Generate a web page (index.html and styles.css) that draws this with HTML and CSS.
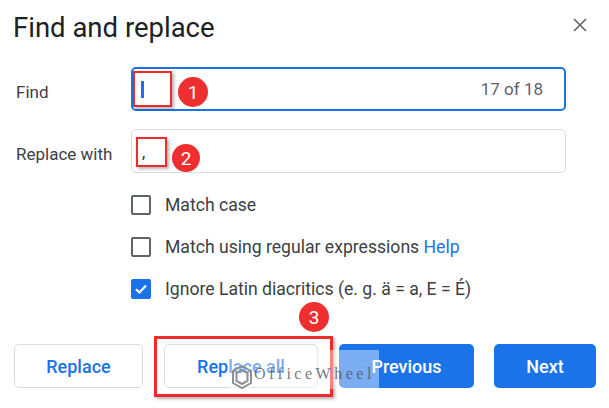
FILE: index.html
```html
<!DOCTYPE html>
<html lang="en">
<head>
<meta charset="utf-8">
<title>Find and replace</title>
<link rel="stylesheet" href="styles.css">
</head>
<body>
<div class="dialog">
  <header class="head">
    <h1 class="title">Find and replace</h1>
    <button class="close" aria-label="Close">
      <svg width="14" height="14" viewBox="0 0 14 14"><path d="M1 1L13 13M13 1L1 13" stroke="#5f6368" stroke-width="1.6" fill="none"/></svg>
    </button>
  </header>

  <div class="fields">
    <label class="label">Find</label>
    <div class="input input-focus">
      <span class="caret"></span>
      <span class="count">17 of 18</span>
    </div>
    <label class="label">Replace with</label>
    <div class="input">
      <span class="comma">,</span>
    </div>
  </div>

  <div class="options">
    <div class="option"><span class="box"></span><span class="opt-text">Match case</span></div>
    <div class="option"><span class="box"></span><span class="opt-text">Match using regular expressions <a class="help">Help</a></span></div>
    <div class="option"><span class="box box-checked"><svg width="14" height="14" viewBox="0 0 14 14"><path d="M2 7.2L5.4 10.4L12 3.6" stroke="#fff" stroke-width="2.2" fill="none"/></svg></span><span class="opt-text">Ignore Latin diacritics (e. g. ä = a, E = É)</span></div>
  </div>

  <div class="actions">
    <button class="btn btn-outline w-replace">Replace</button>
    <button class="btn btn-outline w-all">Replace all</button>
    <button class="btn btn-primary w-prev">Previous</button>
    <button class="btn btn-primary w-next">Next</button>
  </div>

  <div class="mark mark-1"></div>
  <div class="badge badge-1">1</div>
  <div class="mark mark-2"></div>
  <div class="badge badge-2">2</div>
  <div class="mark mark-3"></div>
  <div class="badge badge-3">3</div>

  <div class="watermark">
    <svg class="wm-logo" width="20" height="24" viewBox="0 0 20 24"><path d="M10 1L19 6V18L10 23L1 18V6Z M10 5L15.5 8V16L10 19L4.5 16V8Z" fill="none" stroke="#8a8f96" stroke-width="2"/></svg>
    <span class="wm-text">OfficeWheel</span>
  </div>
</div>
</body>
</html>
```

FILE: styles.css
```css
* { box-sizing: border-box; }
html, body { margin: 0; padding: 0; background: #fff; }
body { font-family: Roboto, "Noto Sans", Arial, sans-serif; color: #3c4043; }

.dialog { position: relative; width: 609px; height: 408px; overflow: hidden; }

.head {
  height: 54px;
  display: flex;
  align-items: center;
  justify-content: space-between;
  padding: 0 22px 0 13px;
}
.title { margin: 0; font-size: 27.5px; font-weight: 400; color: #202124; letter-spacing: 0; }
.close { border: 0; background: none; padding: 0; width: 14px; height: 14px; display: flex; margin-top: -4px; }

.fields {
  margin-top: 13px;
  display: grid;
  grid-template-columns: 131px 435px;
  row-gap: 18px;
  align-items: center;
}
.label { padding: 5px 0 0 16px; font-size: 17px; color: #3c4043; }
.input {
  position: relative;
  height: 44px;
  border: 1px solid #dadce0;
  border-radius: 5px;
  display: flex;
  align-items: center;
  padding: 0 21px 0 10px;
}
.input-focus { border: 2px solid #1a73e8; padding-left: 8px; }
.caret { width: 3px; height: 17px; background: #1a73e8; }
.count { margin-left: auto; font-size: 17px; color: #5f6368; }
.comma { font-size: 16px; color: #202124; margin-top: 2px; }

.options { margin: 11px 0 0 131px; }
.option { height: 42px; display: flex; align-items: center; }
.box {
  width: 20px; height: 20px;
  border: 2px solid #5f6368;
  border-radius: 2px;
  margin-right: 14px;
  display: flex; align-items: center; justify-content: center;
}
.box-checked { background: #1a73e8; border-color: #1a73e8; }
.opt-text { font-size: 17.6px; color: #3c4043; }
.help { color: #1a73e8; text-decoration: none; }

.actions {
  margin: 34px 0 0 14px;
  display: flex;
  gap: 21px;
}
.btn {
  height: 44px;
  border-radius: 5px;
  font-family: Roboto, Arial, sans-serif;
  font-size: 18px;
  font-weight: 500;
  padding: 0;
}
.btn-outline { background: #fff; border: 1px solid #dadce0; color: #1a73e8; }
.btn-primary { background: #1a73e8; border: 0; color: #fff; }
.w-replace { width: 129px; }
.w-all { width: 154px; }
.w-prev { width: 135px; }
.w-next { width: 102px; margin-left: -1px; }

/* annotation overlays */
.mark {
  position: absolute;
  border: 2px solid #ee2a2a;
  box-shadow: 2px 2px 3px rgba(0,0,0,0.3);
}
.mark-1 { left: 133px; top: 71px; width: 39px; height: 36px; }
.mark-2 { left: 136px; top: 137px; width: 31px; height: 30px; }
.mark-3 { left: 154px; top: 336px; width: 179px; height: 61px; border-width: 3px; }

.badge {
  position: absolute;
  width: 30px; height: 30px;
  border-radius: 50%;
  background: #ef2f2f;
  color: #fff;
  font-size: 19px;
  display: flex; align-items: center; justify-content: center;
}
.badge-1 { left: 178px; top: 77px; }
.badge-2 { left: 172px; top: 144px; width: 28px; height: 28px; }
.badge-3 { left: 299px; top: 302px; }

.watermark {
  position: absolute;
  left: 229px; top: 350px;
  width: 150px; height: 39px;
  background: rgba(255,255,255,0.42);
  display: flex; align-items: center;
  padding-left: 3px;
  gap: 2px;
}
.wm-logo { margin-top: 14px; }
.wm-text {
  font-family: "Liberation Serif", serif;
  font-size: 16px;
  letter-spacing: 3.5px;
  color: rgba(70,75,85,0.75);
  margin-top: 8px;
}
```
